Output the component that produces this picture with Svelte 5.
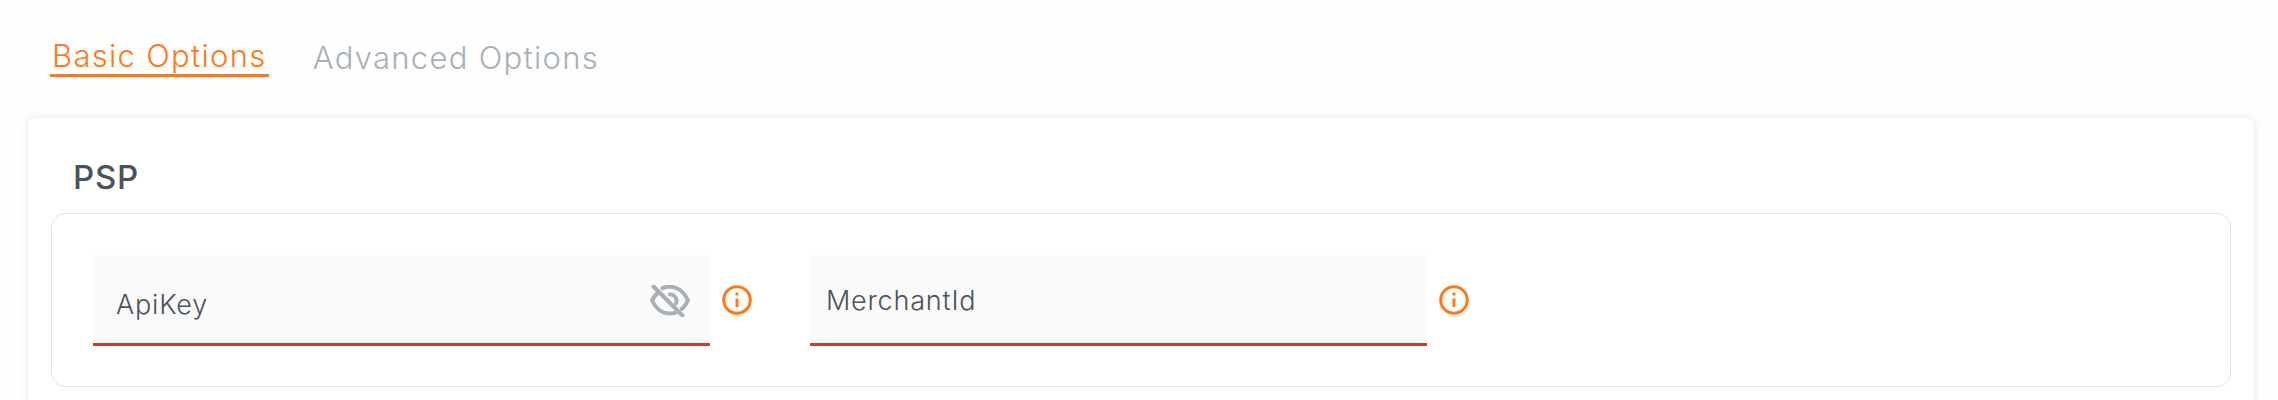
<script lang="ts">
  let tabs = [
    { label: 'Basic Options', active: true },
    { label: 'Advanced Options', active: false }
  ];
</script>

<div class="page">
  <nav class="tabs">
    {#each tabs as tab}
      <button class="tab" class:active={tab.active}>{tab.label}</button>
    {/each}
  </nav>

  <section class="card">
    <h2 class="title">PSP</h2>
    <div class="group">
      <div class="field-wrap">
        <div class="field secret">
          <span class="label">ApiKey</span>
          <svg class="eye" width="40" height="32" viewBox="0 0 40 32" fill="none" stroke="#a9b0b5" stroke-width="4" stroke-linecap="round" stroke-linejoin="round">
            <path d="M8.5 7.5C5.500 9.500 3.500 12.500 2 15.500c3.500 7.500 10 13 18 13 3 0 5.500-.6 8-1.800" />
            <path d="M12.500 3.200C14.800 2.200 17.300 1.700 20 1.700c8 0 14.500 6 18 13.800-1.600 3.400-3.600 6.300-6.200 8.500" />
            <path d="M20 9.500c3.600 0 6.500 2.800 6.500 6.400 0 .9-.2 1.700-.5 2.400" />
            <path d="M3.500 1.500L32.500 30.500" />
          </svg>
        </div>
        <svg class="info" width="30" height="30" viewBox="0 0 30 30" fill="none" stroke="#fd7a17" stroke-width="3">
          <circle cx="15" cy="15" r="13.300" />
          <path d="M15 13.500V22" />
          <path d="M15 7.500V10.500" />
        </svg>
      </div>

      <div class="field-wrap">
        <div class="field">
          <span class="label">MerchantId</span>
        </div>
        <svg class="info" width="30" height="30" viewBox="0 0 30 30" fill="none" stroke="#fd7a17" stroke-width="3">
          <circle cx="15" cy="15" r="13.300" />
          <path d="M15 13.500V22" />
          <path d="M15 7.500V10.500" />
        </svg>
      </div>
    </div>
  </section>
</div>

<style>
  :global(body) {
    background: #fefefe;
    overflow: hidden;
  }

  .page {
    height: 400px;
    padding: 0 24px 0 28px;
    font-family: Inter, sans-serif;
    color: #49535b;
    overflow: hidden;
  }

  .tabs {
    display: flex;
    gap: 42px;
    padding: 34px 0 0 22px;
    height: 118px;
    box-sizing: border-box;
  }

  .tab {
    height: 43px;
    padding: 4px 2px 0;
    border: none;
    background: none;
    font: inherit;
    font-size: 31px;
    font-weight: 300;
    line-height: 36px;
    letter-spacing: 1.3px;
    color: #a8b0b9;
    white-space: nowrap;
  }

  .tab.active {
    color: #fd7a17;
    border-bottom: 3px solid #fd7a17;
  }

  .card {
    height: 340px;
    box-sizing: border-box;
    padding: 0 23px;
    background: #fff;
    border-radius: 8px;
    box-shadow: 0 0 8px rgba(0, 0, 0, 0.1);
  }

  .title {
    margin: 0;
    padding: 39px 0 0 22px;
    height: 95px;
    box-sizing: border-box;
    font-size: 33px;
    line-height: 40px;
    font-weight: 500;
    letter-spacing: 0.8px;
  }

  .group {
    display: flex;
    gap: 58px;
    height: 174px;
    box-sizing: border-box;
    padding: 41px 41px 0;
    border: 1.500px solid #e2e2e8;
    border-radius: 14px;
  }

  .field-wrap {
    display: flex;
    align-items: flex-start;
    gap: 12px;
  }

  .field {
    display: flex;
    justify-content: space-between;
    width: 617px;
    height: 91px;
    box-sizing: border-box;
    padding: 30px 14px 0 16px;
    background: #fafafa;
    border-bottom: 3px solid #cf3a2c;
  }

  .field.secret {
    padding-top: 30px;
    padding-left: 23px;
  }

  .label {
    font-size: 27px;
    font-weight: 300;
    line-height: 32px;
    letter-spacing: 0.8px;
    white-space: nowrap;
  }

  .secret .label {
    margin-top: 4px;
  }

  .eye {
    margin-right: 6px;
  }

  .info {
    margin-top: 30px;
    flex-shrink: 0;
  }
</style>
